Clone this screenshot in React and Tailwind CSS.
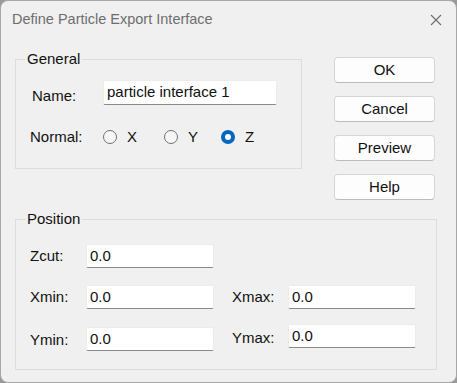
import React from 'react';

const font = { fontFamily: '"Liberation Sans", Arial, sans-serif' };

function Field({ value, className = '' }) {
  return (
    <div className={`h-[24px] bg-white rounded-[2px] border border-[#ececec] border-b-[#8a8a8a] flex items-center px-[3px] text-[15px] text-[#111] ${className}`}>
      {value}
    </div>
  );
}

function Radio({ label, checked, className = '' }) {
  return (
    <div className={`flex items-center gap-[10px] ${className}`}>
      {checked ? (
        <span className="w-[14px] h-[14px] rounded-full bg-[#0067c0] flex items-center justify-center">
          <span className="w-[6px] h-[6px] rounded-full bg-white" />
        </span>
      ) : (
        <span className="w-[14px] h-[14px] rounded-full border border-[#707070] bg-[#f6f6f6]" />
      )}
      <span>{label}</span>
    </div>
  );
}

function Button({ children }) {
  return (
    <button className="w-[101px] h-[26px] bg-[#fdfdfd] rounded-[4px] border border-[#d5d5d5] border-b-[#bcbcbc] text-[15px] text-[#111] flex items-center justify-center">
      {children}
    </button>
  );
}

function GroupBox({ title, className = '', children }) {
  return (
    <div className={`relative border border-[#dcdcdc] ${className}`}>
      <span className="absolute -top-[11px] left-[9px] px-[2px] bg-[#f0f0f0] leading-[20px]">{title}</span>
      {children}
    </div>
  );
}

export default function App() {
  return (
    <div className="w-[457px] h-[383px] bg-[#9a9a9a] text-[15px] text-[#111]" style={font}>
      <div className="w-full h-full bg-[#f0f0f0] rounded-[8px] border border-[#a7a7a7] flex flex-col">
        <div className="h-[37px] flex items-center justify-between pl-[11px] pr-[14px] shrink-0">
          <span className="text-[14.5px] text-[#6e6e6e]">Define Particle Export Interface</span>
          <svg width="12" height="12" viewBox="0 0 12 12" className="text-[#6e6e6e]">
            <path d="M1 1 L11 11 M11 1 L1 11" stroke="currentColor" strokeWidth="1.1" fill="none" />
          </svg>
        </div>
        <div className="flex pl-[14px]">
          <GroupBox title="General" className="w-[287px] h-[110px] mt-[21px]">
            <div className="flex items-start mt-[20px] pl-[16px]">
              <span className="w-[71px] mt-[7px] leading-[17px]">Name:</span>
              <Field value="particle interface 1" className="w-[174px] h-[25px]" />
            </div>
            <div className="flex items-center mt-[21px] pl-[14px]">
              <span className="w-[73px]">Normal:</span>
              <div className="flex">
                <Radio label="X" className="w-[61px]" />
                <Radio label="Y" className="w-[57px]" />
                <Radio label="Z" checked />
              </div>
            </div>
          </GroupBox>
          <div className="flex flex-col gap-[13px] ml-[32px] mt-[19px]">
            <Button>OK</Button>
            <Button>Cancel</Button>
            <Button>Preview</Button>
            <Button>Help</Button>
          </div>
        </div>
        <div className="pl-[14px]">
          <GroupBox title="Position" className="w-[422px] h-[151px] mt-[19px]">
            <div className="flex items-center mt-[24px] pl-[14px]">
              <span className="w-[56px]">Zcut:</span>
              <Field value="0.0" className="w-[128px]" />
            </div>
            <div className="flex items-center mt-[17px] pl-[14px]">
              <span className="w-[56px]">Xmin:</span>
              <Field value="0.0" className="w-[128px]" />
              <span className="w-[56px] ml-[18px]">Xmax:</span>
              <Field value="0.0" className="w-[128px]" />
            </div>
            <div className="flex items-start mt-[15px] pl-[14px]">
              <span className="w-[56px] mt-[5px]">Ymin:</span>
              <Field value="0.0" className="w-[128px] mt-[3px]" />
              <span className="w-[56px] ml-[18px] mt-[3px]">Ymax:</span>
              <Field value="0.0" className="w-[128px]" />
            </div>
          </GroupBox>
        </div>
      </div>
    </div>
  );
}
